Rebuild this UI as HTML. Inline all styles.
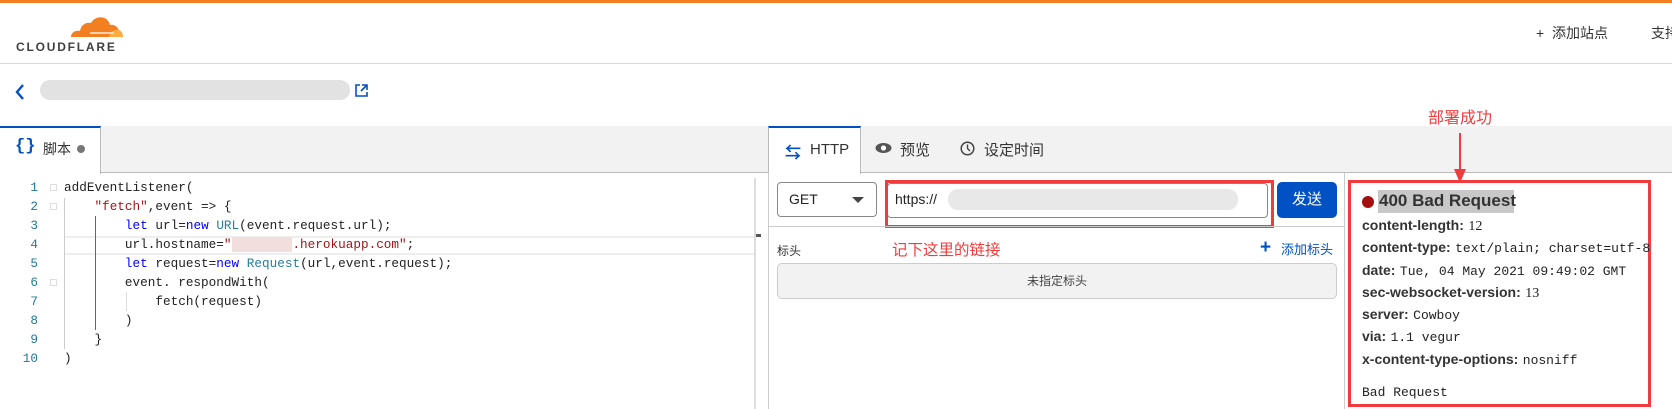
<!DOCTYPE html>
<html><head><meta charset="utf-8"><style>
*{margin:0;padding:0;box-sizing:border-box}
body{width:1672px;height:409px;overflow:hidden;background:#fff;font-family:"Liberation Sans","Noto Sans CJK SC",sans-serif;position:relative;color:#222}
.a{position:absolute;white-space:nowrap}
.code{font-family:"Liberation Mono","Noto Sans CJK SC",monospace;font-size:12.7px;white-space:pre;line-height:19px}
.ln{position:absolute;left:0;width:38px;text-align:right;color:#237893;font-family:"Liberation Mono",monospace;font-size:12.7px;line-height:19px}
.k{color:#0000ff}.s{color:#a31515}.c{color:#267f99}
.hk{font-weight:bold;font-size:14px;color:#333}
.hv{font-family:"Liberation Serif","Noto Serif CJK SC",serif;font-size:14px;color:#222}
.blur{position:absolute;background:#e2e2e2;border-radius:10px}
</style></head><body>
<div class="a" style="left:0;top:0;width:1672px;height:3px;background:#f38020"></div>
<!-- logo -->
<svg class="a" style="left:68px;top:13px" width="56" height="26" viewBox="0 0 56 26">
<path d="M3 24 C3 19 8 17 12 18 C13 12 18 9 23 10 C27 2 40 2 42 12 C46 11 51 14 51 19 L52 24 Z" fill="#f38020"/>
<path d="M41 24 C42 19 46 16 51 17 C54 18 55 21 55 24 Z" fill="#fbad41"/>
<path d="M22 20 L46 20" stroke="#fff" stroke-width="1.2"/>
</svg>
<div class="a" style="left:16px;top:40px;font-size:12px;font-weight:bold;letter-spacing:1.8px;color:#404041">CLOUDFLARE</div>
<div class="a" style="left:1536px;top:23px;font-size:14px;color:#333">+&nbsp; 添加站点</div>
<div class="a" style="left:1651px;top:23px;font-size:14px;color:#333">支持</div>
<div class="a" style="left:0;top:63px;width:1672px;height:1px;background:#d9d9d9"></div>
<!-- back row -->
<svg class="a" style="left:14px;top:83px" width="12" height="18"><path d="M9 2 L3 9 L9 16" stroke="#0051c3" stroke-width="2.4" fill="none"/></svg>
<div class="blur" style="left:40px;top:80px;width:310px;height:20px"></div>
<svg class="a" style="left:354px;top:83px" width="15" height="15"><path d="M6 2 H2 V13 H13 V9 M8 2 H13 V7 M13 2 L7 8" stroke="#0051c3" stroke-width="1.6" fill="none"/></svg>
<div class="a" style="left:1428px;top:104px;font-size:16px;color:#f03c3c">部署成功</div>
<!-- tab bar -->
<div class="a" style="left:0;top:126px;width:1672px;height:47px;background:#f2f2f2;border-bottom:1px solid #bbb"></div>
<div class="a" style="left:0;top:126px;width:101px;height:48px;background:#fff;border-top:2px solid #0051c3;border-right:1px solid #bbb"></div>
<div class="a" style="left:15px;top:137px;font-size:17px;font-weight:bold;color:#0051c3;font-family:'Liberation Mono',monospace">{}</div>
<div class="a" style="left:43px;top:139px;font-size:14px;color:#333">脚本</div>
<div class="a" style="left:77px;top:145px;width:8px;height:8px;border-radius:50%;background:#777"></div>
<!-- right tabs -->
<div class="a" style="left:768px;top:126px;width:93px;height:48px;background:#fff;border-top:2px solid #0051c3;border-left:1px solid #bbb;border-right:1px solid #bbb"></div>
<div class="a" style="left:785px;top:139px;font-size:16px;font-weight:bold;color:#0051c3">⇆</div>
<div class="a" style="left:810px;top:141px;font-size:15px;color:#333">HTTP</div>
<svg class="a" style="left:875px;top:142px" width="17" height="12"><ellipse cx="8.5" cy="6" rx="8" ry="5" fill="#555"/><circle cx="8.5" cy="6" r="2.6" fill="#fff"/></svg>
<div class="a" style="left:900px;top:139px;font-size:15px;color:#333">预览</div>
<svg class="a" style="left:960px;top:141px" width="15" height="15"><circle cx="7.5" cy="7.5" r="6.3" stroke="#444" stroke-width="1.5" fill="none"/><path d="M7.5 3.5 V7.5 L10 10" stroke="#444" stroke-width="1.4" fill="none"/></svg>
<div class="a" style="left:984px;top:139px;font-size:15px;color:#333">设定时间</div>
<!-- editor -->
<div class="a" style="left:754px;top:178px;width:2px;height:231px;background:#ddd"></div>
<div class="a" style="left:756px;top:234px;width:5px;height:3px;background:#555"></div>
<div class="a" style="left:768px;top:173px;width:1px;height:236px;background:#ccc"></div>
<div class="a" style="left:65px;top:236px;width:689px;height:19px;border-top:2px solid #eee;border-bottom:2px solid #eee"></div>
<div class="a" style="left:64px;top:198px;width:1px;height:151px;background:#ccc"></div>
<div class="a" style="left:95px;top:216px;width:1px;height:114px;background:#666"></div>
<div class="a" style="left:126px;top:292px;width:1px;height:19px;background:#ddd"></div>
<div class="a" style="left:0;top:178px">
<div class="ln" style="top:0">1</div><div class="ln" style="top:19px">2</div><div class="ln" style="top:38px">3</div><div class="ln" style="top:57px">4</div><div class="ln" style="top:76px">5</div><div class="ln" style="top:95px">6</div><div class="ln" style="top:114px">7</div><div class="ln" style="top:133px">8</div><div class="ln" style="top:152px">9</div><div class="ln" style="top:171px">10</div>
</div>
<div class="a" style="left:50px;top:184px;width:7px;height:7px;border:1px solid #ddd"></div>
<div class="a" style="left:50px;top:203px;width:7px;height:7px;border:1px solid #ddd"></div>
<div class="a" style="left:50px;top:279px;width:7px;height:7px;border:1px solid #ddd"></div>
<div class="a code" style="left:64px;top:178px">addEventListener(
    <span class="s">"fetch"</span>,event =&gt; {
        <span class="k">let</span> url=<span class="k">new</span> <span class="c">URL</span>(event.request.url);
        url.hostname=<span class="s">"<span style="background:#f3dede;color:#f3dede">xxxxxxxx</span>.herokuapp.com"</span>;
        <span class="k">let</span> request=<span class="k">new</span> <span class="c">Request</span>(url,event.request);
        event. respondWith(
            fetch(request)
        )
    }
)</div>
<!-- request panel -->
<div class="a" style="left:777px;top:182px;width:100px;height:35px;border:1px solid #888;border-radius:4px"></div>
<div class="a" style="left:789px;top:191px;font-size:14px;color:#222">GET</div>
<div class="a" style="left:852px;top:197px;width:0;height:0;border-left:6px solid transparent;border-right:6px solid transparent;border-top:6px solid #444"></div>
<div class="a" style="left:887px;top:183px;width:381px;height:35px;border:1px solid #888;border-radius:4px"></div>
<div class="a" style="left:895px;top:191px;font-size:14px;color:#222">https://</div>
<div class="blur" style="left:948px;top:189px;width:290px;height:21px;background:#e8e8e8"></div>
<div class="a" style="left:885px;top:180px;width:389px;height:48px;border:3px solid #f03c3c"></div>
<div class="a" style="left:1277px;top:182px;width:60px;height:36px;background:#0051c3;border-radius:5px;color:#fff;font-size:15px;text-align:center;line-height:36px">发送</div>
<div class="a" style="left:768px;top:226px;width:576px;height:1px;background:#ccc"></div>
<div class="a" style="left:1344px;top:173px;width:1px;height:236px;background:#ccc"></div>
<div class="a" style="left:777px;top:242px;font-size:12px;color:#333">标头</div>
<div class="a" style="left:892px;top:238px;font-size:15.5px;color:#f03c3c">记下这里的链接</div>
<div class="a" style="left:1260px;top:237px;font-size:19px;font-weight:bold;color:#0051c3">+</div>
<div class="a" style="left:1281px;top:239px;font-size:13px;color:#0051c3">添加标头</div>
<div class="a" style="left:777px;top:263px;width:560px;height:36px;background:#f2f2f2;border:1px solid #ccc;border-radius:5px;text-align:center;line-height:34px;font-size:12px;color:#444">未指定标头</div>
<!-- response -->
<div class="a" style="left:1348px;top:180px;width:303px;height:227px;border:3px solid #f03c3c"></div>
<svg class="a" style="left:1454px;top:133px" width="12" height="50"><path d="M6 0 V38" stroke="#f03c3c" stroke-width="2"/><path d="M0 36 L12 36 L6 50 Z" fill="#f03c3c"/></svg>
<div class="a" style="left:1362px;top:196px;width:12px;height:12px;border-radius:50%;background:#a50e0e"></div>
<div class="a" style="left:1378px;top:190px;width:136px;height:23px;background:#c8c8c8"></div>
<div class="a" style="left:1379px;top:191px;font-size:17px;font-weight:bold;color:#333">400 Bad Request</div>
<div class="a" style="left:1362px;top:215px;line-height:21.3px;white-space:nowrap">
<div><span class="hk">content-length:</span> <span class="hv">12</span></div>
<div><span class="hk">content-type:</span> <span class="hv" style="font-size:13px;font-family:'Liberation Mono',monospace">text/plain; charset=utf-8</span></div>
<div><span class="hk">date:</span> <span class="hv" style="font-size:13px;font-family:'Liberation Mono',monospace">Tue, 04 May 2021 09:49:02 GMT</span></div>
<div><span class="hk">sec-websocket-version:</span> <span class="hv">13</span></div>
<div><span class="hk">server:</span> <span class="hv" style="font-size:13px;font-family:'Liberation Mono',monospace">Cowboy</span></div>
<div><span class="hk">via:</span> <span class="hv" style="font-size:13px;font-family:'Liberation Mono',monospace">1.1 vegur</span></div>
<div><span class="hk">x-content-type-options:</span> <span class="hv" style="font-size:13px;font-family:'Liberation Mono',monospace">nosniff</span></div>
</div>
<div class="a" style="left:1362px;top:385px;font-size:13px;font-family:'Liberation Mono',monospace;color:#222">Bad Request</div>
</body></html>
